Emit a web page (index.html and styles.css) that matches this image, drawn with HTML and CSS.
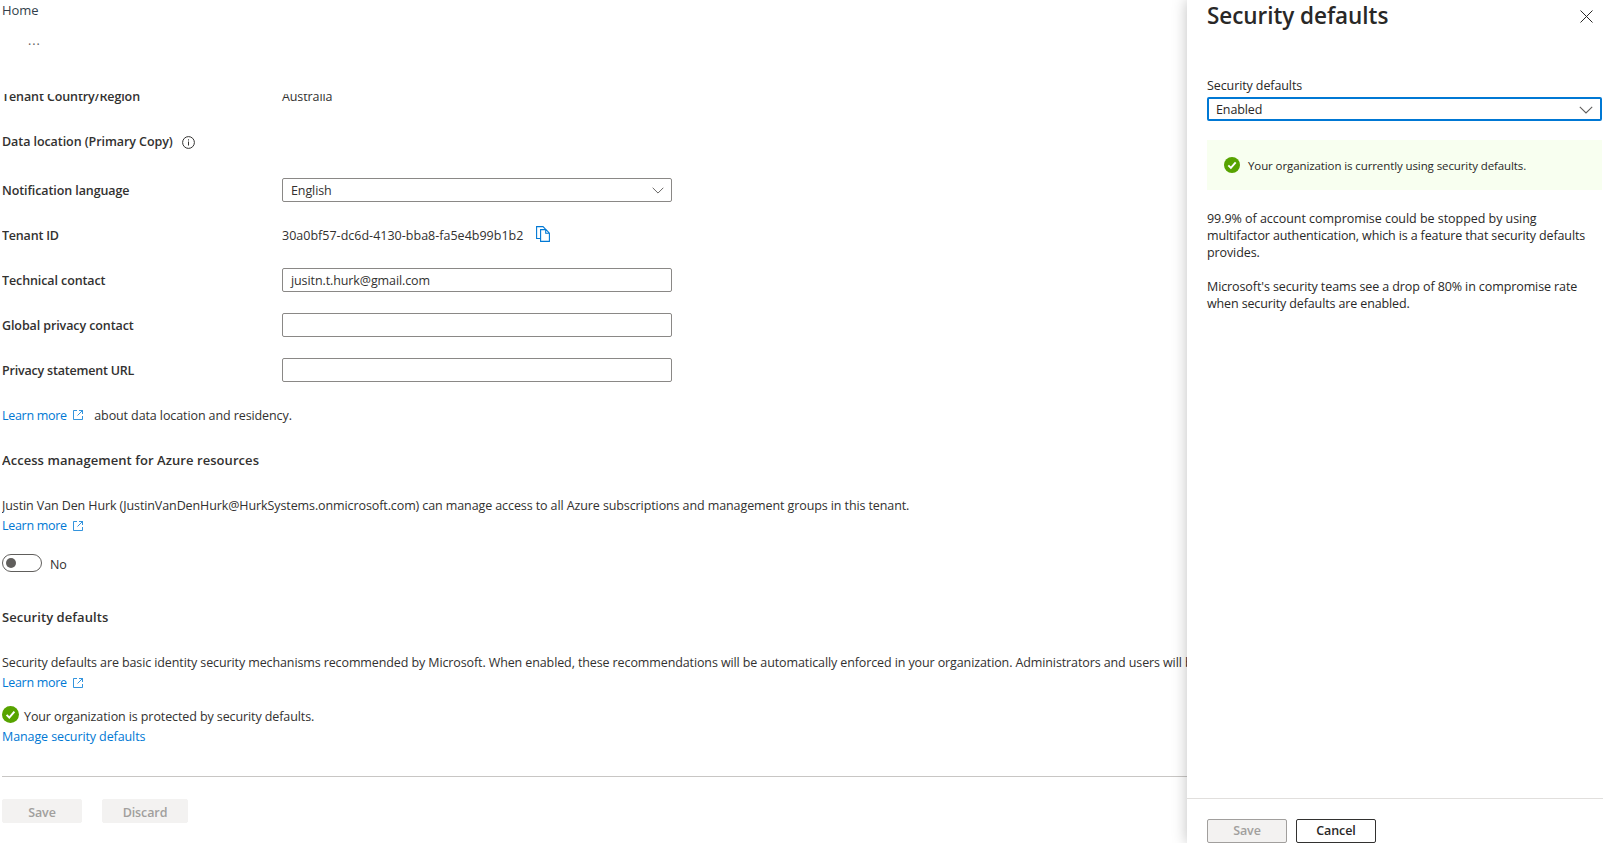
FILE: index.html
```
<!DOCTYPE html>
<html lang="en">
<head>
  <meta charset="UTF-8">
  <meta name="viewport" content="width=device-width, initial-scale=1.0">
  <title>Security defaults</title>
  <link rel="stylesheet" href="styles.css">
</head>
<body>

  <!-- Shared icons -->
  <svg class="sprite">
    <symbol id="external" viewBox="0 0 10 10">
      <path d="M4 .5H.5v9h9V6M6 .5h3.500V4M9.500 .5L4.500 5.500" fill="none" stroke="currentColor" stroke-width=".8"/>
    </symbol>
    <symbol id="chevron" viewBox="0 0 14 8">
      <path d="M.8 .8L7 7l6.200-6.200" fill="none" stroke="currentColor" stroke-width="1.100"/>
    </symbol>
    <symbol id="success" viewBox="0 0 17 17">
      <circle cx="8.500" cy="8.500" r="8.500" fill="#57a300"/>
      <path d="M4.600 8.900l2.700 2.700 5.100-5.900" fill="none" stroke="#fff" stroke-width="2"/>
    </symbol>
  </svg>

  <!-- Tenant properties -->
  <main class="blade">
    <nav class="breadcrumb"><a class="home">Home</a></nav>
    <div class="more">...</div>

    <div class="scroll">
      <div class="row row-country"><label>Tenant Country/Region</label><span>Australia</span></div>
      <div class="row">
        <label class="location">Data location (Primary Copy)</label>
        <svg class="info" viewBox="0 0 13 13"><circle cx="6.500" cy="6.500" r="5.900" fill="none" stroke="currentColor"/><path d="M6.500 5.500v4M6.500 3.300v1.200" stroke="currentColor"/></svg>
      </div>
      <div class="row row-language"><label>Notification language</label><div class="field select"><span>English</span><svg class="chevron"><use href="#chevron"/></svg></div></div>
      <div class="row">
        <label class="tight">Tenant ID</label><span class="guid">30a0bf57-dc6d-4130-bba8-fa5e4b99b1b2</span>
        <svg class="copy" viewBox="0 0 14 16"><path d="M4 12.500H.6V.6h6.400l2.500 2.500M4.600 3.600h5.400l3.400 3.500v8.300H4.600zM9.700 3.700v3.600h3.600" fill="none" stroke="currentColor" stroke-width="1.100"/></svg>
      </div>
      <div class="row"><label>Technical contact</label><div class="field"><span>jusitn.t.hurk@gmail.com</span></div></div>
      <div class="row"><label>Global privacy contact</label><div class="field"></div></div>
      <div class="row"><label class="tight">Privacy statement URL</label><div class="field"></div></div>
      <div class="row"><a class="learn">Learn more</a><svg class="external"><use href="#external"/></svg><span class="residency">about data location and residency.</span></div>

      <h2>Access management for Azure resources</h2>
      <div class="description">
        <p>Justin Van Den Hurk (JustinVanDenHurk@HurkSystems.onmicrosoft.com) can manage access to all Azure subscriptions and management groups in this tenant.</p>
        <div class="line"><a class="learn">Learn more</a><svg class="external"><use href="#external"/></svg></div>
      </div>
      <div class="toggle-row"><div class="toggle"><i></i></div><span>No</span></div>

      <h2>Security defaults</h2>
      <div class="description">
        <p class="basic">Security defaults are basic identity security mechanisms recommended by Microsoft. When enabled, these recommendations will be automatically enforced in your organization. Administrators and users will be</p>
        <div class="line"><a class="learn">Learn more</a><svg class="external"><use href="#external"/></svg></div>
      </div>
      <div class="status"><svg class="success"><use href="#success"/></svg><span>Your organization is protected by security defaults.</span></div>
      <a class="manage">Manage security defaults</a>
    </div>

    <footer class="blade-footer">
      <button disabled>Save</button>
      <button class="discard" disabled>Discard</button>
    </footer>
  </main>

  <!-- Security defaults panel -->
  <aside class="panel">
    <header>
      <h1>Security defaults</h1>
      <svg class="close" viewBox="0 0 13 13"><path d="M.5 .5l12 12M12.500 .5l-12 12" stroke="currentColor"/></svg>
    </header>
    <div class="panel-body">
      <label class="panel-label">Security defaults</label>
      <div class="field select focused"><span>Enabled</span><svg class="chevron"><use href="#chevron"/></svg></div>
      <div class="banner"><svg class="success"><use href="#success"/></svg><span>Your organization is currently using security defaults.</span></div>
      <p><span class="wide">99.9% of account compromise could be stopped by using</span><br><span class="narrow">multifactor authentication, which is a feature that security defaults</span><br>provides.</p>
      <p>Microsoft's security teams see a drop of 80% in compromise rate<br><span class="narrow">when security defaults are enabled.</span></p>
    </div>
    <footer>
      <button disabled>Save</button>
      <button class="cancel">Cancel</button>
    </footer>
  </aside>

</body>
</html>
```
FILE: styles.css
```
* {
  box-sizing: border-box;
}
body {
  margin: 0;
  height: 843px;
  display: grid;
  grid-template-columns: 1187px 416px;
  overflow: hidden;
  background: #fff;
  color: #323130;
  font-family: "Segoe UI", "Open Sans", "Noto Sans", sans-serif;
  font-size: 12.5px;
  letter-spacing: -0.1px;
  line-height: 20px;
  white-space: nowrap;
}
h1, h2, p {
  margin: 0;
}
a {
  color: #0078d4;
}
svg {
  flex: none;
}
.sprite {
  position: absolute;
  width: 0;
  height: 0;
}

/* Main blade */
.blade {
  height: 843px;
  padding-left: 2px;
  display: flex;
  flex-direction: column;
  overflow: hidden;
}
.breadcrumb {
  height: 20px;
}
.home {
  color: #323f4b;
  font-size: 13px;
}
.more {
  height: 74px;
  padding: 11px 0 0 26px;
  color: #605e5c;
  letter-spacing: 1px;
}
.scroll {
  height: 682px;
  overflow: hidden;
}
.row {
  height: 45px;
  display: flex;
  align-items: center;
}
.row-country {
  margin: -20.5px 0 1px;
}
.row-language {
  margin-top: 3px;
}
.row label,
.row span {
  padding-top: 2px;
}
.row label {
  width: 280px;
  font-weight: 600;
}
.row .location {
  width: auto;
  padding-top: 0;
  letter-spacing: -0.07px;
}
.row .tight {
  letter-spacing: -0.2px;
}
.info {
  width: 13px;
  height: 13px;
  margin-left: 9px;
}
.field {
  width: 390px;
  height: 24px;
  padding: 0 7px 0 8px;
  display: flex;
  align-items: center;
  border: 1px solid #8a8886;
  border-radius: 2px;
}
.select {
  justify-content: space-between;
}
.chevron {
  width: 12px;
  height: 7px;
  margin-top: 1px;
  color: #605e5c;
}
.guid {
  letter-spacing: 0.01px;
}
.copy {
  width: 14px;
  height: 16px;
  margin: -2px 0 0 13px;
  color: #0078d4;
}
.learn {
  letter-spacing: -0.3px;
}
.row .learn {
  padding-top: 2px;
}
.external {
  width: 10px;
  height: 10px;
  margin-left: 6.5px;
  color: #0078d4;
}
.residency {
  margin-left: 11px;
}
h2 {
  height: 45px;
  font-size: 13px;
  font-weight: 600;
  letter-spacing: 0.06px;
  line-height: 45px;
}
.description {
  height: 54px;
  padding-top: 13.5px;
}
.basic {
  letter-spacing: -0.11px;
}
.line {
  height: 20px;
  display: flex;
  align-items: center;
}
.toggle-row {
  height: 58px;
  padding-top: 17.5px;
  display: flex;
  gap: 8px;
}
.toggle-row span {
  padding-top: 1px;
}
.toggle {
  width: 40px;
  height: 18px;
  padding: 3px;
  border: 1px solid #605e5c;
  border-radius: 9px;
}
.toggle i {
  display: block;
  width: 10px;
  height: 10px;
  border-radius: 50%;
  background: #605e5c;
}
.status {
  height: 33px;
  padding-top: 12.5px;
  display: flex;
  gap: 5px;
}
.status span {
  padding-top: 1px;
}
.success {
  width: 17px;
  height: 17px;
}
.manage {
  display: block;
}
.blade-footer {
  height: 67px;
  padding-top: 22px;
  display: flex;
  gap: 20px;
  border-top: 1px solid #c8c6c4;
}
button {
  width: 80px;
  height: 24px;
  padding: 0;
  border: 1px solid #f3f2f1;
  border-radius: 2px;
  background: #f3f2f1;
  color: #a19f9d;
  font: inherit;
  font-weight: 600;
  letter-spacing: inherit;
  line-height: 20px;
}
.blade-footer button {
  padding-top: 3px;
}
.discard {
  width: 86px;
}

/* Side panel */
.panel {
  position: relative;
  height: 843px;
  display: flex;
  flex-direction: column;
  background: #fff;
  box-shadow: 0 0 14px rgba(0, 0, 0, 0.25);
  color: #292827;
}
.panel header {
  height: 76px;
  padding: 0 10px 0 20px;
  display: flex;
  justify-content: space-between;
}
h1 {
  font-size: 22.5px;
  font-weight: 600;
  letter-spacing: -0.05px;
  line-height: 32px;
}
.close {
  width: 13px;
  height: 13px;
  margin-top: 10px;
}
.panel-body {
  flex: 1;
  padding: 0 1px 0 20px;
}
.panel-label {
  display: block;
  height: 21px;
}
.focused {
  width: 395px;
  padding: 0 7px;
  border: 2px solid #0078d4;
}
.focused span {
  padding-top: 2px;
}
.focused .chevron {
  width: 14px;
  height: 8px;
}
.banner {
  height: 50px;
  margin: 19px 0 20px;
  padding-left: 17px;
  display: flex;
  align-items: center;
  gap: 8px;
  background: #f8fff0;
  font-size: 11.5px;
}
.banner span {
  padding-top: 2px;
}
.banner .success {
  width: 16px;
  height: 16px;
}
.panel p {
  margin-bottom: 17px;
  line-height: 17px;
}
.wide {
  letter-spacing: -0.04px;
}
.narrow {
  letter-spacing: -0.13px;
}
.panel footer {
  height: 45px;
  padding: 20px 20px 0;
  display: flex;
  gap: 9px;
  border-top: 1px solid #e1dfdd;
}
.panel button {
  border-color: #a19f9d;
}
.panel .cancel {
  border-color: #323130;
  background: #fff;
  color: #292827;
}
```
